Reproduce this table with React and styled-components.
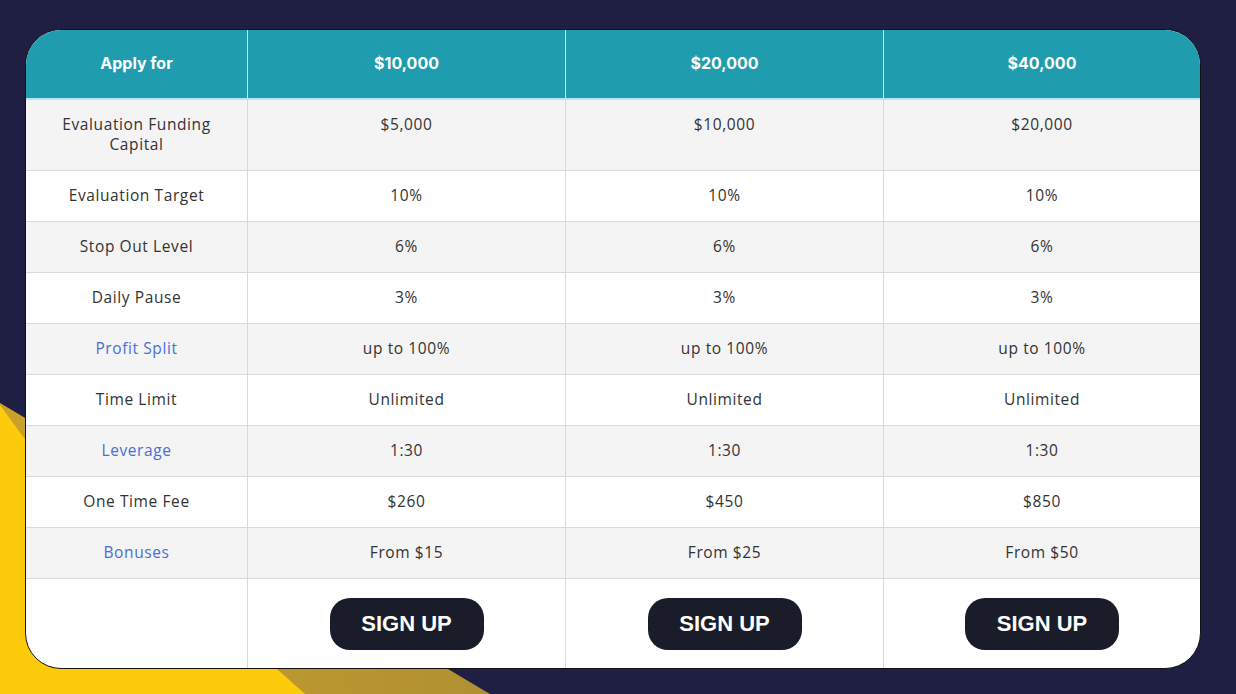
import React from 'react'
import styled, { createGlobalStyle } from 'styled-components'

const GlobalStyle = createGlobalStyle`
  body {
    margin: 0;
    background: #1e1f42;
    font-family: "Open Sans", Inter, sans-serif;
  }
`

const plans = ['$10,000', '$20,000', '$40,000']

const rows = [
  { label: 'Evaluation Funding Capital', values: ['$5,000', '$10,000', '$20,000'] },
  { label: 'Evaluation Target', values: ['10%', '10%', '10%'] },
  { label: 'Stop Out Level', values: ['6%', '6%', '6%'] },
  { label: 'Daily Pause', values: ['3%', '3%', '3%'] },
  { label: 'Profit Split', link: true, values: ['up to 100%', 'up to 100%', 'up to 100%'] },
  { label: 'Time Limit', values: ['Unlimited', 'Unlimited', 'Unlimited'] },
  { label: 'Leverage', link: true, values: ['1:30', '1:30', '1:30'] },
  { label: 'One Time Fee', values: ['$260', '$450', '$850'] },
  { label: 'Bonuses', link: true, values: ['From $15', 'From $25', 'From $50'] },
]

function Backdrop() {
  return (
    <BackSvg viewBox="0 0 1236 694" preserveAspectRatio="none">
      <defs>
        <linearGradient id="gold" x1="0" y1="0" x2="1" y2="0">
          <stop offset="0" stopColor="#c9a12a" />
          <stop offset="1" stopColor="#b09032" />
        </linearGradient>
      </defs>
      <polygon points="0,403 490,694 0,694" fill="url(#gold)" />
      <polygon points="0,405 24,438 277,669 305,694 0,694" fill="#fccb0c" />
    </BackSvg>
  )
}

export default function App() {
  return (
    <>
      <GlobalStyle />
      <Page>
        <Backdrop />
        <Card>
          <HeadRow>
            <HeadCell>Apply for</HeadCell>
            {plans.map(p => <HeadCell key={p} divided>{p}</HeadCell>)}
          </HeadRow>
          {rows.map((r, i) => (
            <Row key={r.label} striped={i % 2 === 0}>
              <Cell link={r.link}>{r.label}</Cell>
              {r.values.map((v, j) => <Cell key={j} divided>{v}</Cell>)}
            </Row>
          ))}
          <FootRow>
            <FootCell />
            {plans.map(p => (
              <FootCell key={p} divided>
                <SignUp>SIGN UP</SignUp>
              </FootCell>
            ))}
          </FootRow>
        </Card>
      </Page>
    </>
  )
}

const Page = styled.div`
  position: relative;
  width: 1236px;
  height: 694px;
  padding: 29px 35px 25px 25px;
  box-sizing: border-box;
  overflow: hidden;
`

const BackSvg = styled.svg`
  position: absolute;
  inset: 0;
  width: 100%;
  height: 100%;
`

const Card = styled.div`
  position: relative;
  display: flex;
  flex-direction: column;
  height: 640px;
  background: #fff;
  border: 1px solid #111;
  border-radius: 36px;
  overflow: hidden;
  box-sizing: border-box;
`

const cols = `221px 318px 318px 1fr`

const HeadRow = styled.div`
  display: grid;
  grid-template-columns: ${cols};
  height: 70px;
  background: #1f9cad;
  border-bottom: 2px solid #b4e8ef;
  box-sizing: border-box;
`

const HeadCell = styled.div`
  display: flex;
  align-items: center;
  justify-content: center;
  padding-bottom: 2px;
  color: #fff;
  font-family: Inter, sans-serif;
  font-size: 16px;
  font-weight: 700;
  border-left: ${p => (p.divided ? '1px solid #c8eef3' : 'none')};
`

const Row = styled.div`
  display: grid;
  grid-template-columns: ${cols};
  background: ${p => (p.striped ? '#f4f4f4' : '#fff')};
  border-bottom: 1px solid #d9d9d9;
`

const Cell = styled.div`
  padding: 14px 20px 16px;
  font-size: 15.5px;
  line-height: 20px;
  text-align: center;
  color: ${p => (p.link ? '#4a6fd6' : '#333')};
  letter-spacing: 0.6px;
  border-left: ${p => (p.divided ? '1px solid #d9d9d9' : 'none')};
`

const FootRow = styled.div`
  flex: 1;
  display: grid;
  grid-template-columns: ${cols};
`

const FootCell = styled.div`
  display: flex;
  justify-content: center;
  align-items: flex-start;
  padding-top: 19px;
  border-left: ${p => (p.divided ? '1px solid #d9d9d9' : 'none')};
`

const SignUp = styled.button`
  width: 154px;
  height: 52px;
  border: none;
  border-radius: 20px;
  background: #1a1d29;
  color: #fff;
  font-family: "Liberation Sans", Arial, sans-serif;
  font-weight: 700;
  font-size: 22px;
  cursor: pointer;
`
